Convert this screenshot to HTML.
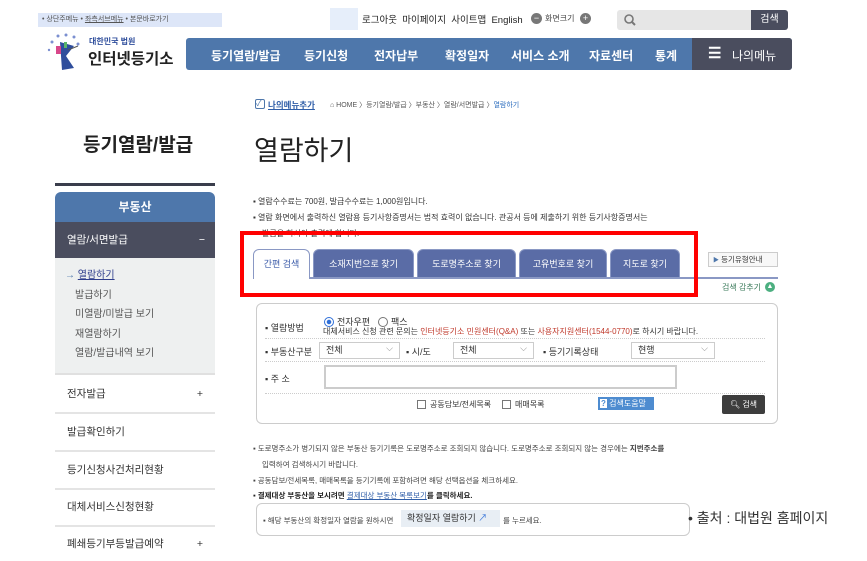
<!DOCTYPE html>
<html><head><meta charset="utf-8">
<style>
*{margin:0;padding:0;box-sizing:border-box}
body{width:867px;height:549px;overflow:hidden;background:#fff;font-family:"Liberation Sans","Noto Sans CJK KR",sans-serif;color:#333;position:relative}
.a{position:absolute;white-space:nowrap}
.s9{font-size:9px}.s8{font-size:8px}
.nav span{position:absolute;top:9px;color:#fff;font-size:12px;font-weight:bold}
.side div.it{position:absolute;left:55px;width:160px;border-bottom:2px solid #e4e4e4;font-size:10.5px;color:#333;padding-left:12px}
.tab{position:absolute;top:249px;height:29px;background:#5a6ca6;color:#fff;font-size:9px;text-align:center;line-height:28px;border-radius:6px 6px 0 0;border:1px solid #8a98c4}
.sel{position:absolute;height:17px;border:1px solid #ccc;font-size:9px;padding-left:6px;line-height:15px;background:#fff}
.sel:after{content:"⌵";position:absolute;right:6px;top:-2px;color:#888;font-size:9px}
.lbl{position:absolute;font-size:9px;color:#333}
.dash{position:absolute;left:265px;width:500px;border-top:1px dotted #ccc}
</style></head><body>
<!-- top -->
<div class="a" style="left:38px;top:13px;width:184px;height:14px;background:#dde6f8;color:#555;line-height:14px;padding-left:4px;font-size:7px">• 상단주메뉴 • <u>좌측서브메뉴</u> • 본문바로가기</div>
<div class="a" style="left:330px;top:8px;width:28px;height:22px;background:#e6eefa"></div>
<div class="a" style="left:362px;top:12px;font-size:9.5px;color:#222">로그아웃&nbsp;&nbsp;마이페이지&nbsp;&nbsp;사이트맵&nbsp;&nbsp;English</div>
<div class="a" style="left:531px;top:13px;width:11px;height:11px;border-radius:50%;background:#777;color:#fff;font-size:9px;line-height:10px;text-align:center">−</div>
<div class="a" style="left:545px;top:13px;font-size:8px;color:#444">화면크기</div>
<div class="a" style="left:580px;top:13px;width:11px;height:11px;border-radius:50%;background:#777;color:#fff;font-size:9px;line-height:11px;text-align:center">+</div>
<div class="a" style="left:617px;top:10px;width:134px;height:20px;background:#e6e6e6;border-radius:3px 0 0 3px"></div>
<svg class="a" style="left:623px;top:13px" width="14" height="14"><circle cx="6" cy="6" r="4" stroke="#777" stroke-width="1.6" fill="none"/><line x1="9" y1="9" x2="12" y2="12" stroke="#777" stroke-width="2"/></svg>
<div class="a" style="left:751px;top:10px;width:37px;height:20px;background:#4a4d5e;color:#fff;font-size:10px;text-align:center;line-height:20px;border-radius:0 3px 3px 0">검색</div>
<!-- logo -->
<svg class="a" style="left:44px;top:32px" width="40" height="40"><g fill="#7b8fd0"><circle cx="14" cy="4" r="1.5"/><circle cx="22" cy="3" r="1.5"/><circle cx="30" cy="5" r="1.5"/><circle cx="8" cy="10" r="1.5"/><circle cx="34" cy="12" r="1.5"/><circle cx="5" cy="18" r="1.2"/></g><path d="M16 10 L18 38 L30 36 L22 24 L30 14 Z" fill="#2f4e9c"/><rect x="12" y="14" width="5" height="8" fill="#d8478a"/><rect x="20" y="10" width="3" height="6" fill="#5bb56a"/><path d="M24 18 l10 -4" stroke="#555" stroke-width="1"/></svg>
<div class="a" style="left:89px;top:36px;font-size:8px;font-weight:bold;color:#2f4e9c">대한민국 법원</div>
<div class="a" style="left:88px;top:47px;font-size:15.5px;font-weight:bold;color:#222">인터넷등기소</div>
<!-- nav -->
<div class="a nav" style="left:186px;top:38px;width:606px;height:32px;background:#4e77ab;border-radius:3px">
<span style="left:25px">등기열람/발급</span><span style="left:118px">등기신청</span><span style="left:188px">전자납부</span><span style="left:259px">확정일자</span><span style="left:325px">서비스 소개</span><span style="left:403px">자료센터</span><span style="left:469px">통계</span>
<div style="position:absolute;left:506px;top:0;width:100px;height:32px;background:#4a4d5e;border-radius:0 3px 3px 0"><span style="left:16px;top:6px;font-size:15px">☰</span><span style="left:40px;font-weight:normal">나의메뉴</span></div>
</div>
<!-- breadcrumb -->
<div class="a" style="left:255px;top:99px;width:10px;height:10px;border:1.5px solid #4e77ab;border-radius:2px;font-size:8px;color:#4e77ab;line-height:7px">✓</div>
<div class="a" style="left:268px;top:99px;font-size:8.5px;color:#2f5ea8;font-weight:bold;text-decoration:underline">나의메뉴추가</div>
<div class="a" style="left:330px;top:100px;font-size:7px;color:#555">⌂ HOME 〉등기열람/발급 〉부동산 〉열람/서면발급 〉<span style="color:#2f6fbf">열람하기</span></div>
<!-- titles -->
<div class="a" style="left:83px;top:130px;font-size:19px;font-weight:bold;color:#222">등기열람/발급</div>
<div class="a" style="left:254px;top:129px;font-size:27px;color:#222">열람하기</div>
<!-- sidebar -->
<div class="a" style="left:55px;top:183px;width:160px;height:3px;background:#3a3d4c"></div>
<div class="a" style="left:55px;top:192px;width:160px;height:30px;background:#4e77ab;border-radius:6px 6px 0 0;color:#fff;font-size:12px;font-weight:bold;text-align:center;line-height:30px">부동산</div>
<div class="a" style="left:55px;top:222px;width:160px;height:36px;background:#4a4d5e;color:#fff;font-size:10.5px;line-height:36px;padding-left:12px">열람/서면발급<span style="position:absolute;right:10px">−</span></div>
<div class="a" style="left:55px;top:258px;width:160px;height:117px;background:#eef0f0;font-size:10px;color:#555;line-height:19.5px;padding:8px 0 0 10px;border-bottom:2px solid #e0e0e0">
<div><span style="color:#4e77ab">→ </span><u style="color:#2f3e8c">열람하기</u></div><div style="padding-left:10px">발급하기</div><div style="padding-left:10px">미열람/미발급 보기</div><div style="padding-left:10px">재열람하기</div><div style="padding-left:10px">열람/발급내역 보기</div></div>
<div class="side">
<div class="it" style="top:377px;height:37px;line-height:34px">전자발급<span style="position:absolute;right:12px">+</span></div>
<div class="it" style="top:414px;height:38px;line-height:36px">발급확인하기</div>
<div class="it" style="top:452px;height:38px;line-height:36px">등기신청사건처리현황</div>
<div class="it" style="top:490px;height:37px;line-height:35px">대체서비스신청현황</div>
<div class="it" style="top:527px;height:30px;line-height:34px;border:none">폐쇄등기부등발급예약<span style="position:absolute;right:12px">+</span></div>
</div>
<!-- notes -->
<div class="a s8" style="left:253px;top:196px;color:#333">▪ 열람수수료는 700원, 발급수수료는 1,000원입니다.</div>
<div class="a s8" style="left:253px;top:212px;color:#333">▪ 열람 화면에서 출력하신 열람용 등기사항증명서는 법적 효력이 없습니다. 관공서 등에 제출하기 위한 등기사항증명서는</div>
<div class="a s8" style="left:262px;top:228px;color:#333">발급을 하셔야 출력에 합니다.</div>
<!-- tabs -->
<div class="a" style="left:253px;top:277px;width:525px;height:2px;background:#8a98c4"></div>
<div class="tab" style="left:253px;width:57px;background:#fff;color:#3a5aa8;height:30px;border-bottom:none">간편 검색</div>
<div class="tab" style="left:313px;width:101px">소재지번으로 찾기</div>
<div class="tab" style="left:417px;width:99px">도로명주소로 찾기</div>
<div class="tab" style="left:519px;width:88px">고유번호로 찾기</div>
<div class="tab" style="left:610px;width:70px">지도로 찾기</div>
<div class="a" style="left:240px;top:231px;width:458px;height:66px;border:4px solid #f00"></div>
<div class="a" style="left:708px;top:252px;width:70px;height:15px;border:1px solid #ccc;background:#f8f8f8;font-size:7.5px;line-height:13px;padding-left:4px"><span style="color:#4e77ab;font-size:6px">▶</span> 등기유형안내</div>
<div class="a" style="left:722px;top:282px;font-size:8px;color:#3a7a5a">검색 감추기</div>
<div class="a" style="left:765px;top:282px;width:10px;height:10px;border-radius:50%;background:#4caf80;color:#fff;font-size:7px;text-align:center;line-height:10px">▲</div>
<!-- form -->
<div class="a" style="left:256px;top:303px;width:522px;height:121px;border:1px solid #ccc;border-radius:6px"></div>
<div class="lbl" style="left:265px;top:321px">▪ 열람방법</div>
<div class="a" style="left:324px;top:317px;width:10px;height:10px;border-radius:50%;border:1px solid #2f6fd8;background:radial-gradient(#2f6fd8 35%,#fff 45%)"></div>
<div class="lbl" style="left:337px;top:315px">전자우편</div>
<div class="a" style="left:378px;top:317px;width:10px;height:10px;border-radius:50%;border:1px solid #777"></div>
<div class="lbl" style="left:391px;top:315px">팩스</div>
<div class="lbl" style="left:323px;top:326px;font-size:8px">대체서비스 신청 관련 문의는 <span style="color:#c0392b">인터넷등기소 민원센터(Q&amp;A)</span> 또는 <span style="color:#c0392b">사용자지원센터(1544-0770)</span>로 하시기 바랍니다.</div>
<div class="dash" style="top:338px"></div>
<div class="lbl" style="left:265px;top:345px">▪ 부동산구분</div>
<div class="sel" style="left:319px;top:342px;width:81px">전체</div>
<div class="lbl" style="left:406px;top:345px">▪ 시/도</div>
<div class="sel" style="left:453px;top:342px;width:81px">전체</div>
<div class="lbl" style="left:543px;top:345px">▪ 등기기록상태</div>
<div class="sel" style="left:631px;top:342px;width:84px">현행</div>
<div class="dash" style="top:361px"></div>
<div class="lbl" style="left:265px;top:372px">▪ 주 소</div>
<div class="a" style="left:324px;top:365px;width:353px;height:24px;border:2px solid #ccc"></div>
<div class="dash" style="top:393px"></div>
<div class="a" style="left:417px;top:400px;width:9px;height:9px;border:1px solid #777"></div>
<div class="lbl" style="left:430px;top:399px;font-size:8px">공동담보/전세목록</div>
<div class="a" style="left:502px;top:400px;width:9px;height:9px;border:1px solid #777"></div>
<div class="lbl" style="left:515px;top:399px;font-size:8px">매매목록</div>
<div class="a" style="left:598px;top:397px;width:56px;height:13px;background:#4e8cd0;color:#fff;font-size:8px;line-height:13px;padding-left:2px"><b style="background:#fff;color:#4e8cd0;padding:0 1px">?</b> 검색도움말</div>
<div class="a" style="left:722px;top:395px;width:43px;height:19px;background:#3d3d3d;color:#fff;font-size:8px;line-height:19px;text-align:center;border-radius:2px">🔍︎ 검색</div>
<!-- bottom notes -->
<div class="a" style="left:253px;top:443px;font-size:7.5px;color:#444">▪ 도로명주소가 병기되지 않은 부동산 등기기록은 도로명주소로 조회되지 않습니다. 도로명주소로 조회되지 않는 경우에는 <b>지번주소를</b></div>
<div class="a" style="left:262px;top:459px;font-size:7.5px;color:#444">입력하여 검색하시기 바랍니다.</div>
<div class="a" style="left:253px;top:475px;font-size:7.5px;color:#444">▪ 공동담보/전세목록, 매매목록을 등기기록에 포함하려면 해당 선택옵션을 체크하세요.</div>
<div class="a" style="left:253px;top:490px;font-size:7.5px;color:#222;font-weight:bold">▪ 결제대상 부동산을 보시려면 <u style="color:#2f5ea8;font-weight:normal">결제대상 부동산 목록보기</u>를 클릭하세요.</div>
<div class="a" style="left:256px;top:503px;width:434px;height:33px;border:1px solid #ccc;border-radius:6px"></div>
<div class="a" style="left:263px;top:515px;font-size:7.5px;color:#444">▪ 해당 부동산의 확정일자 열람을 원하시면</div>
<div class="a" style="left:401px;top:510px;width:99px;height:17px;background:#e8eef4;font-size:9px;line-height:17px;padding-left:6px;color:#333">확정일자 열람하기 <span style="color:#2f6fd8">↗</span></div>
<div class="a" style="left:503px;top:515px;font-size:7.5px;color:#444">를 누르세요.</div>
<div class="a" style="left:688px;top:508px;font-size:14px;color:#333">• 출처 : 대법원 홈페이지</div>
</body></html>
